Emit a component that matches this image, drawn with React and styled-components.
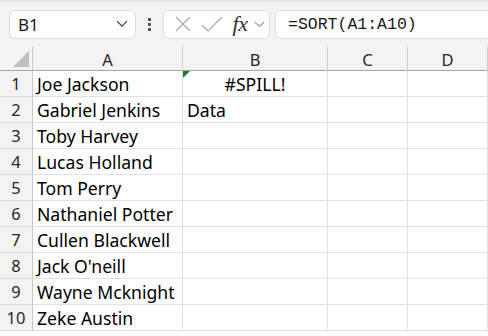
import React from "react";
import styled, { createGlobalStyle } from "styled-components";

const Global = createGlobalStyle`
  html, body { margin: 0; padding: 0; background: #ffffff; }
  body { font-family: "Noto Sans", "Open Sans", sans-serif; overflow: hidden; }
`;

const Page = styled.div`
  width: 488px;
  height: 336px;
  overflow: hidden;
  background: #ffffff;
`;

const Toolbar = styled.div`
  height: 46px;
  box-sizing: border-box;
  background: #f3f3f3;
  border-top: 2px solid #e6e6e6;
  display: flex;
  align-items: center;
  padding: 0 0 0 9px;
  overflow: hidden;
`;

const Box = styled.div`
  height: 29px;
  box-sizing: border-box;
  background: #ffffff;
  border: 1px solid #dcdcdc;
  border-radius: 6px;
  display: flex;
  align-items: center;
  flex-shrink: 0;
`;

const NameBox = styled(Box)`
  width: 127px;
  padding: 0 7px 0 8px;
  justify-content: space-between;
  font-size: 17px;
  color: #1a1a1a;
`;

const Dots = styled.div`
  width: 27px;
  display: flex;
  flex-direction: column;
  align-items: center;
  gap: 2px;
  flex-shrink: 0;
  span {
    width: 3px;
    height: 3px;
    background: #555;
  }
`;

const FxGroup = styled(Box)`
  width: 107px;
  padding: 0 0 0 6px;
  gap: 0;
`;

const IconSlot = styled.div`
  width: ${(p) => p.$w}px;
  display: flex;
  align-items: center;
  justify-content: center;
`;

const Fx = styled.span`
  font-family: "Liberation Serif", "DejaVu Serif", serif;
  font-style: italic;
  font-size: 22px;
  color: #333;
  line-height: 1;
  letter-spacing: -0.5px;
`;

const FormulaBox = styled(Box)`
  margin-left: 5px;
  width: 240px;
  padding-left: 12px;
  font-family: "Liberation Mono", "DejaVu Sans Mono", monospace;
  font-size: 16.5px;
  color: #1a1a1a;
`;

const Grid = styled.div`
  display: grid;
  grid-template-columns: 33px 150px 145px 80px 80px;
  grid-auto-rows: 26px;
  grid-template-rows: 25px;
`;

const Corner = styled.div`
  position: relative;
  background: #f3f3f3;
  border-right: 1px solid #c8c8c8;
  border-bottom: 1px solid #a6a6a6;
  box-sizing: border-box;
  &::after {
    content: "";
    position: absolute;
    right: 3px;
    bottom: 3px;
    width: 0;
    height: 0;
    border-left: 16px solid transparent;
    border-bottom: 16px solid #bfbfbf;
  }
`;

const ColHead = styled.div`
  background: #f3f3f3;
  border-right: 1px solid #d0d0d0;
  border-bottom: 1px solid #a6a6a6;
  box-sizing: border-box;
  display: flex;
  align-items: center;
  justify-content: center;
  font-size: 16.5px;
  color: #262626;
  padding-top: 2px;
`;

const RowHead = styled.div`
  background: #f3f3f3;
  border-right: 1px solid #c8c8c8;
  border-bottom: 1px solid #dadada;
  box-sizing: border-box;
  display: flex;
  align-items: center;
  justify-content: center;
  font-size: 16.5px;
  color: #262626;
`;

const Cell = styled.div`
  position: relative;
  border-right: 1px solid #e1e1e1;
  border-bottom: 1px solid #e1e1e1;
  box-sizing: border-box;
  display: flex;
  align-items: center;
  justify-content: ${(p) => (p.$center ? "center" : "flex-start")};
  padding: 0 4px;
  font-size: 17.6px;
  color: #000;
  white-space: nowrap;
  overflow: hidden;
`;

const ErrorMark = styled.span`
  position: absolute;
  left: 0;
  top: 0;
  width: 0;
  height: 0;
  border-top: 7px solid #1e7d1e;
  border-right: 7px solid transparent;
`;

const names = [
  "Joe Jackson",
  "Gabriel Jenkins",
  "Toby Harvey",
  "Lucas Holland",
  "Tom Perry",
  "Nathaniel Potter",
  "Cullen Blackwell",
  "Jack O'neill",
  "Wayne Mcknight",
  "Zeke Austin",
];

const Chevron = ({ color = "#444", size = 12 }) => (
  <svg width={size} height={size * 0.6} viewBox="0 0 12 7" fill="none">
    <path d="M1 1l5 5 5-5" stroke={color} strokeWidth="1.3" />
  </svg>
);

export default function App() {
  return (
    <Page>
      <Global />
      <Toolbar>
        <NameBox>
          <span>B1</span>
          <Chevron color="#3a3a3a" size={12} />
        </NameBox>
        <Dots>
          <span />
          <span />
          <span />
        </Dots>
        <FxGroup>
          <IconSlot $w={26}>
            <svg width="16" height="16" viewBox="0 0 16 16">
              <path d="M1 1l14 14M15 1L1 15" stroke="#a8a8a8" strokeWidth="1.2" />
            </svg>
          </IconSlot>
          <IconSlot $w={32}>
            <svg width="22" height="16" viewBox="0 0 22 16">
              <path d="M1 9l6 6L21 1" stroke="#a8a8a8" strokeWidth="1.2" fill="none" />
            </svg>
          </IconSlot>
          <IconSlot $w={24}>
            <Fx>fx</Fx>
          </IconSlot>
          <IconSlot $w={14}>
            <Chevron color="#9a9a9a" size={11} />
          </IconSlot>
        </FxGroup>
        <FormulaBox>=SORT(A1:A10)</FormulaBox>
      </Toolbar>
      <Grid>
        <Corner />
        <ColHead>A</ColHead>
        <ColHead>B</ColHead>
        <ColHead>C</ColHead>
        <ColHead>D</ColHead>
        {names.map((n, i) => (
          <React.Fragment key={n}>
            <RowHead>{i + 1}</RowHead>
            <Cell>{n}</Cell>
            {i === 0 ? (
              <Cell $center>
                <ErrorMark />
                #SPILL!
              </Cell>
            ) : i === 1 ? (
              <Cell>Data</Cell>
            ) : (
              <Cell />
            )}
            <Cell />
            <Cell />
          </React.Fragment>
        ))}
      </Grid>
    </Page>
  );
}
